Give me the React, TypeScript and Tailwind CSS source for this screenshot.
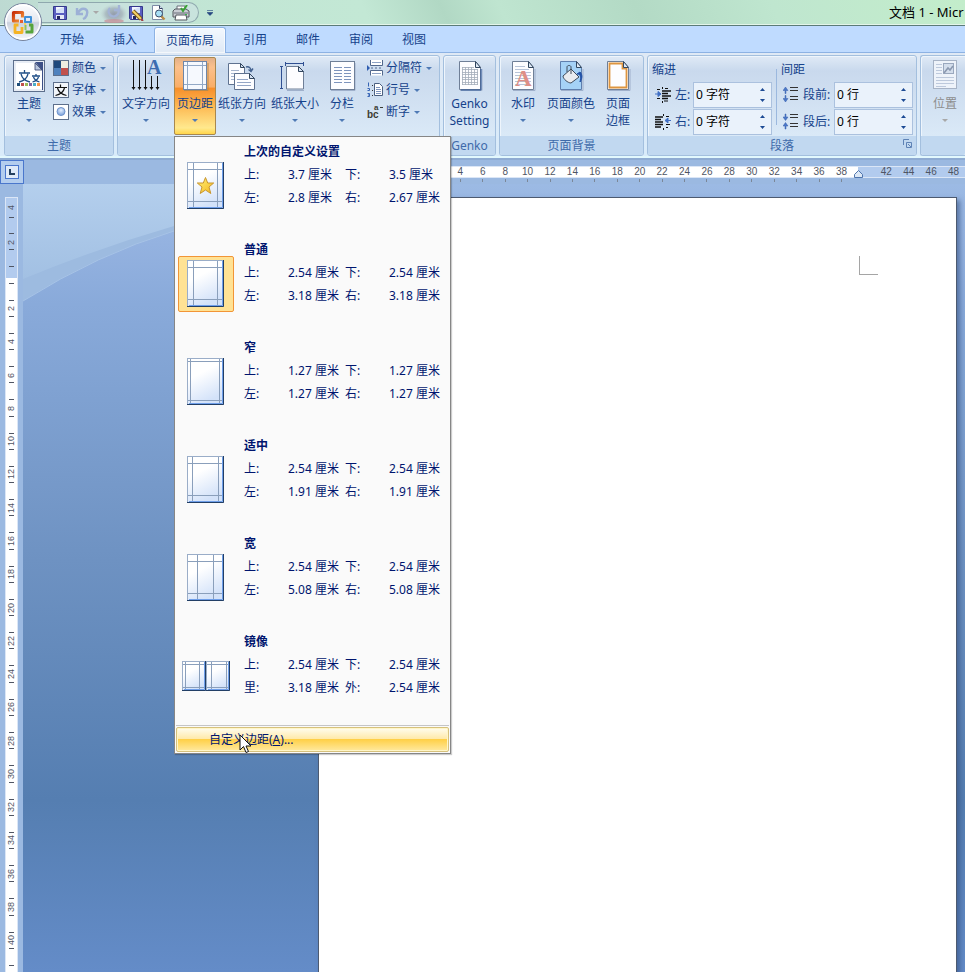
import React from "react";

type Kids = { children?: React.ReactNode };

function Caret({ muted = false }: { muted?: boolean }) {
  return (
    <svg width="6" height="3" viewBox="0 0 6 3" className="shrink-0" aria-hidden="true">
      <path d="M0 0h6L3 3z" fill={muted ? "#a8a8a8" : "#4f7ab5"} />
    </svg>
  );
}

/* ---------- quick access icons ---------- */

function SaveIcon({ pen = false }: { pen?: boolean }) {
  return (
    <svg width="16" height="16" viewBox="0 0 16 16" aria-hidden="true">
      <path d="M1.500 1.500h13v13h-12l-1-1z" fill="#5a5fc0" stroke="#35388c" />
      <rect x="4" y="2" width="8" height="6" fill="#f4f7ff" />
      <path d="M4 5l8-3v6H4z" fill="#d5e0f8" />
      <rect x="4" y="10" width="8" height="4" fill="#e5e8f5" />
      <rect x="5" y="11" width="3" height="3" fill="#23265f" />
      {pen && (
        <>
          <path d="M5 6l8 8" stroke="#7a5a1d" strokeWidth="4" />
          <path d="M5 6l8 8" stroke="#f7d469" strokeWidth="2" />
          <path d="M13 14l2 2" stroke="#a04040" strokeWidth="2" />
        </>
      )}
    </svg>
  );
}

function UndoIcon() {
  return (
    <svg width="16" height="16" viewBox="0 0 16 16" aria-hidden="true">
      <path d="M3 3v6h6M4 8c2-4 4-5 7-4 3 1 3 5 0 9l-2 1" fill="none" stroke="#9db0d6" strokeWidth="2.4" />
    </svg>
  );
}

function RedoIcon() {
  return (
    <svg width="28" height="20" viewBox="0 0 28 20" aria-hidden="true">
      <defs>
        <radialGradient id="redoGlow">
          <stop offset="0" stopColor="#939cac" />
          <stop offset="0.6" stopColor="#9aa5b0" stopOpacity="0.6" />
          <stop offset="1" stopColor="#b9c8cc" stopOpacity="0" />
        </radialGradient>
      </defs>
      <ellipse cx="14" cy="11" rx="14" ry="10" fill="url(#redoGlow)" />
      <ellipse cx="14" cy="18" rx="10" ry="2" fill="#c98f95" opacity="0.7" />
      <path d="M10 5a5 5 0 1 0 8 1M19 2v5h-5" fill="none" stroke="#a3b3d6" strokeWidth="2.4" />
    </svg>
  );
}

function PreviewIcon() {
  return (
    <svg width="16" height="16" viewBox="0 0 16 16" aria-hidden="true">
      <path d="M2.500.5h7l3 3v11h-10z" fill="#fff" stroke="#7d8ba6" />
      <path d="M9.500.5v3h3" fill="#d6e0f0" stroke="#33415f" />
      <path d="M11 11l3.500 3.500" stroke="#b98b45" strokeWidth="2.400" />
      <circle cx="9" cy="8.500" r="3.500" fill="#a9dff6" stroke="#3a4a66" />
    </svg>
  );
}

function PrintIcon() {
  return (
    <svg width="18" height="16" viewBox="0 0 18 16" aria-hidden="true">
      <path d="M5 5V1h8v4" fill="#fff" stroke="#6a6f7b" />
      <path d="M1 6l2-2h11l3 2v6H1z" fill="#c9ccd3" stroke="#54585f" />
      <path d="M2 8h14" stroke="#6a6f7b" />
      <path d="M4 10h10l1 5H3z" fill="#fff" stroke="#54585f" />
      <path d="M9 3l2 3 4-6" fill="none" stroke="#3aa335" strokeWidth="2" />
      <rect x="13" y="9" width="2" height="1" fill="#35b24a" />
    </svg>
  );
}

function OfficeLogo() {
  return (
    <svg width="40" height="40" viewBox="0 0 40 40" aria-hidden="true">
      <defs>
        <linearGradient id="orb" x1="0" y1="0" x2="0" y2="1">
          <stop offset="0" stopColor="#fdfdff" />
          <stop offset="0.48" stopColor="#e4e7ef" />
          <stop offset="0.52" stopColor="#cbd1dd" />
          <stop offset="1" stopColor="#f7f9fc" />
        </linearGradient>
        <linearGradient id="logoRed" x1="0" y1="0" x2="1" y2="1">
          <stop offset="0" stopColor="#c8300a" />
          <stop offset="1" stopColor="#f79a3b" />
        </linearGradient>
      </defs>
      <circle cx="20" cy="20" r="18.500" fill="url(#orb)" stroke="#75829c" />
      <circle cx="20" cy="20" r="17" fill="none" stroke="#fff" strokeWidth="1.500" />
      <g fill="none" strokeLinejoin="round">
        <path d="M16 19h-5.500V10.500h9v5" stroke="url(#logoRed)" strokeWidth="3.200" />
        <rect x="22" y="15" width="6" height="5" stroke="#3f8fd8" strokeWidth="2" />
        <path d="M15.500 23H12v7.500h7V25" stroke="#f5b324" strokeWidth="2.800" />
        <path d="M22.500 30h6.500v-7h-3" stroke="#57a43c" strokeWidth="3" />
        <path d="M22.500 28v-5" stroke="#8cc45c" strokeWidth="2" />
      </g>
      <rect x="17" y="18" width="3" height="3" fill="#e8602c" />
      <rect x="21" y="21" width="2" height="2" fill="#f9cf5a" />
    </svg>
  );
}

/* ---------- ribbon icons ---------- */

function Sheet({ children, fill = "#fdfdff", edge = "#6f7f97" }: Kids & { fill?: string; edge?: string }) {
  return (
    <svg width="32" height="32" viewBox="0 0 32 32" aria-hidden="true">
      <path d="M6 30.500h22V9" fill="none" stroke="#9fb0cb" />
      <path d="M5.500 1.500h16l5 6v22h-21z" fill={fill} stroke={edge} />
      {children}
      <path d="M21.500 1.500v6h5z" fill="#dfe9f5" stroke="#33475f" />
    </svg>
  );
}

function ThemeIcon() {
  return (
    <svg width="32" height="32" viewBox="0 0 32 32" aria-hidden="true">
      <rect x=".5" y=".5" width="31" height="31" fill="#e8edf5" stroke="#5d6f8c" />
      <path d="M3 3h19l7 7v19H3z" fill="#fff" />
      <path d="M22 2h8v28h-1V10z" fill="#3c4f86" />
      <path d="M22 3v7h7z" fill="#b9c6de" stroke="#33406a" strokeWidth=".8" />
      <g stroke="#1f4e86" strokeWidth="1.300" fill="none">
        <path d="M6 13h11M11.500 10v3M8 14c1 4 4 7 9 8M15 14c-1 4-4 7-9 8" />
        <path d="M19 16h8M23 14v2M20.500 17c1 3 3 4 6 5M25.500 17c-1 3-3 4-6 5" />
      </g>
      <rect x="4" y="23" width="3" height="3" fill="#1f4e79" />
      <rect x="8" y="23" width="3" height="3" fill="#c0504d" />
      <rect x="12" y="23" width="3" height="3" fill="#9bbb59" />
      <rect x="16" y="23" width="3" height="3" fill="#8064a2" />
      <rect x="20" y="23" width="3" height="3" fill="#4bacc6" />
      <rect x="24" y="23" width="3" height="3" fill="#f79646" />
    </svg>
  );
}

function ColorsIcon() {
  return (
    <svg width="16" height="16" viewBox="0 0 16 16" aria-hidden="true">
      <rect width="16" height="16" fill="#5d6f8c" />
      <rect x="1" y="1" width="7" height="7" fill="#1f497d" />
      <rect x="8" y="1" width="7" height="7" fill="#eeece1" />
      <rect x="1" y="8" width="7" height="7" fill="#4f81bd" />
      <rect x="8" y="8" width="7" height="7" fill="#c0504d" />
    </svg>
  );
}

function FontsIcon() {
  return (
    <svg width="16" height="16" viewBox="0 0 16 16" aria-hidden="true">
      <rect x=".5" y=".5" width="15" height="15" fill="#f2f5fa" stroke="#5d6f8c" />
      <path d="M2 5.500h12M7.500 2.500v3M4.500 6c1 4 4 6.500 9 7.500M11.500 6c-1 4-4 6.500-9 7.500" fill="none" stroke="#111" strokeWidth="1.200" />
    </svg>
  );
}

function EffectsIcon() {
  return (
    <svg width="16" height="16" viewBox="0 0 16 16" aria-hidden="true">
      <defs>
        <radialGradient id="bead" cx=".5" cy=".35">
          <stop offset="0" stopColor="#e4efff" />
          <stop offset="1" stopColor="#8fb0e2" />
        </radialGradient>
      </defs>
      <rect x=".5" y=".5" width="15" height="15" fill="#fff" stroke="#5d6f8c" />
      <circle cx="8" cy="7.500" r="4" fill="url(#bead)" stroke="#6f93cc" />
    </svg>
  );
}

function TextDirectionIcon() {
  return (
    <svg width="32" height="32" viewBox="0 0 32 32" aria-hidden="true">
      <path d="M3.500 0v28M9.500 0v28M15.500 0v28M21.500 16v12M27.500 16v12" stroke="#111" />
      <path d="M1.500 27h4l-2 3zM7.500 27h4l-2 3zM13.500 27h4l-2 3zM19.500 27h4l-2 3zM25.500 27h4l-2 3z" fill="#111" />
      <text x="17" y="14" fill="#3d6cb0" className="text-[20px] font-bold [font-family:'Liberation_Serif',serif]">A</text>
    </svg>
  );
}

function MarginsIcon() {
  return (
    <svg width="32" height="32" viewBox="0 0 32 32" aria-hidden="true">
      <path d="M5 30.500h24V3" fill="none" stroke="#b98a4c" />
      <rect x="4.500" y="1.500" width="23" height="28" fill="#f6f9fe" stroke="#6f86a8" />
      <path d="M8.500 2v27M23.500 2v27M5 5.500h22M5 24.500h22" stroke="#93a9c6" />
    </svg>
  );
}

function OrientationIcon() {
  return (
    <svg width="32" height="32" viewBox="0 0 32 32" aria-hidden="true">
      <path d="M2.500 3.500h12l4 4v17h-16z" fill="#fdfdff" stroke="#5f7290" />
      <path d="M14.500 3.500v4h4z" fill="#d5e1f2" stroke="#33475f" />
      <path d="M5 10.500h8M5 13.500h4M5 16.500h3M5 19.500h3" stroke="#a5b4cd" />
      <path d="M8.500 13.500h15l5 5v11h-20z" fill="#fdfdff" stroke="#5f7290" />
      <path d="M23.500 13.500v5h5z" fill="#d5e1f2" stroke="#33475f" />
      <path d="M11 19.500h11M11 22.500h14M11 25.500h14" stroke="#94a6c6" />
      <path d="M20 7c3-1 5 1 5 4M22.500 9.500l2.500 2 2-3" fill="none" stroke="#44628f" strokeWidth="1.400" />
    </svg>
  );
}

function SizeIcon() {
  return (
    <svg width="32" height="32" viewBox="0 0 32 32" aria-hidden="true">
      <path d="M6 3.500h19M6.500 2v4M24.500 2v4M2.500 6v22M1 6.500h3M1 28.500h3" stroke="#2f4f92" />
      <path d="M8 30.500h17" stroke="#9fb0cb" />
      <path d="M7.500 6.500h12l5 5v17.500h-17z" fill="#fdfdff" stroke="#6f7f97" />
      <path d="M19.500 6.500v5h5z" fill="#d5e1f2" stroke="#33475f" />
    </svg>
  );
}

function ColumnsIcon() {
  return (
    <svg width="32" height="32" viewBox="0 0 32 32" aria-hidden="true">
      <path d="M5 30.500h24V3" fill="none" stroke="#9fb0cb" />
      <rect x="4.500" y="1.500" width="24" height="28" fill="#fdfdff" stroke="#6f7f97" />
      <path d="M8 7.500h8M18 7.500h7M8 10.500h8M18 10.500h7M8 13.500h8M18 13.500h7M8 16.500h8M18 16.500h7M8 19.500h8M18 19.500h7M8 22.500h8M18 22.500h7" stroke="#7d94bd" />
    </svg>
  );
}

function BreaksIcon() {
  return (
    <svg width="16" height="16" viewBox="0 0 16 16" aria-hidden="true">
      <path d="M0 5l3 3-3 3z" fill="#2f5db0" />
      <path d="M3.500 0v5.500h12V0M3.500 15.500v-5h12v5" fill="#fff" stroke="#51678c" />
      <path d="M5 2.500h9M5 13.500h9" stroke="#8ea2c5" />
      <path d="M4 8h2M8 8h2M12 8h2" stroke="#51678c" />
    </svg>
  );
}

function LineNumbersIcon() {
  return (
    <svg width="16" height="16" viewBox="0 0 16 16" aria-hidden="true">
      <path d="M1.500.500v4M.500 6.500h2v2h-2M.500 11.500h2v3h-2M1 13h1" fill="none" stroke="#3563b4" />
      <path d="M5.500 3v1M5.500 8v1M5.500 13v1" stroke="#333" />
      <path d="M7.500 1.500h5l3 3v9h-8z" fill="#fff" stroke="#4a5f80" />
      <path d="M9 5.500h4M9 7.500h5M9 9.500h5M9 11.500h5" stroke="#7d94bd" />
    </svg>
  );
}

function HyphenIcon() {
  return (
    <svg width="16" height="16" viewBox="0 0 16 16" aria-hidden="true" fill="#3b3b33">
      <text x="0" y="14" className="text-[10px] font-bold [font-family:'Liberation_Sans',sans-serif]">bc</text>
      <text x="7" y="6" className="text-[8px] font-bold [font-family:'Liberation_Sans',sans-serif]">a</text>
      <rect x="13" y="3" width="3" height="1" />
    </svg>
  );
}

function GenkoIcon() {
  return (
    <Sheet>
      <path d="M8 7.500h12M8 9.500h16M8 12.500h16M8 14.500h16M8 17.500h16M8 19.500h16M8 22.500h16M8 24.500h16M8.500 7v18M11.500 7v18M14.500 7v18M17.500 7v18M20.500 9v16M23.500 9v16" stroke="#a3acba" strokeWidth=".8" />
      <path d="M27 9v21H7" fill="none" stroke="#2f5796" />
    </Sheet>
  );
}

function WatermarkIcon() {
  return (
    <Sheet>
      <path d="M8 6.500h10M8 9.500h14M8 12.500h16M8 15.500h16M8 18.500h16M8 21.500h16M8 24.500h16" stroke="#b8c4d8" />
      <text x="8" y="26" fill="#df8f86" className="text-[23px] font-bold [font-family:'Liberation_Serif',serif]">A</text>
    </Sheet>
  );
}

function PageColorIcon() {
  return (
    <Sheet fill="#a5d2f7" edge="#5f7fae">
      <path d="M8 16l8-7 8 8-8 6c-3 0-8-4-8-7z" fill="#e9ebef" stroke="#3f4a5a" />
      <path d="M12 12V7c0-2 4-2 4 0v7" fill="none" stroke="#3f4a5a" />
      <path d="M22 14c4 0 4 3 3 8 2-3 3-7 0-10z" fill="#2352a8" stroke="#2352a8" />
    </Sheet>
  );
}

function PageBorderIcon() {
  return (
    <Sheet>
      <path d="M7.500 3.500h13v5h4v19h-17z" fill="none" stroke="#dd9540" strokeWidth="1.800" />
    </Sheet>
  );
}

function PositionIcon() {
  return (
    <svg width="32" height="32" viewBox="0 0 32 32" aria-hidden="true">
      <rect x="4.500" y=".5" width="23" height="28" fill="#eef3fa" stroke="#a7b3c6" />
      <path d="M7 4.500h6M7 7.500h6M7 10.500h6M7 13.500h6M7 17.500h18M7 20.500h18M7 23.500h18M7 26.500h10" stroke="#bdc9dc" />
      <rect x="14.500" y="3.500" width="10" height="10" fill="#d4deec" stroke="#9aa8be" />
      <path d="M15 13l4-5 2 2 3-4" fill="none" stroke="#8b99b0" strokeWidth="1.600" />
    </svg>
  );
}

function IndentIcon({ right = false }: { right?: boolean }) {
  return (
    <svg width="16" height="16" viewBox="0 0 16 16" aria-hidden="true">
      {right ? (
        <>
          <path d="M0 3h8M0 5.500h6M0 8h8M0 10.500h8M0 13h6" stroke="#111" strokeWidth="1.500" />
          <path d="M8.500 0v2M8.500 14v2M11 2.500h3M11 10.500h4M11 13.500h2" stroke="#111" />
          <path d="M16 6.500h-4M13 4l-3 2.500L13 9z" fill="#3f6ec4" stroke="#3f6ec4" />
        </>
      ) : (
        <>
          <path d="M7 4h9M7 6.500h6M7 9h9M7 11.500h6" stroke="#111" strokeWidth="1.500" />
          <path d="M7.500 0v2M7.500 14v2M2 2.500h3M2 11.500h3M9 14h4M10 1.500h3" stroke="#111" />
          <path d="M0 7h4M3 4.500L6 7 3 9.500z" fill="#3f6ec4" stroke="#3f6ec4" />
        </>
      )}
    </svg>
  );
}

function SpacingIcon({ after = false }: { after?: boolean }) {
  return (
    <svg width="16" height="17" viewBox="0 0 16 17" aria-hidden="true">
      <path d="M7 1.500h8M7 4.500h8M7 10.500h8M7 13.500h8" stroke="#333" />
      {after ? (
        <path d="M2 1h1v3h2L2.500 7.500 0 4h2zM2 16h1v-3h2L2.500 9.500 0 13h2z" fill="#4b78c8" stroke="#3860ac" strokeWidth=".5" />
      ) : (
        <path d="M2 7.500h1v-3h2L2.500 1 0 4.500h2zM2 9.500h1v3h2L2.500 16 0 12.500h2z" fill="#4b78c8" stroke="#3860ac" strokeWidth=".5" />
      )}
    </svg>
  );
}

/* ---------- ribbon building blocks ---------- */

function Group({ label, width, launcher, children }: Kids & { label?: string; width: string; launcher?: boolean }) {
  return (
    <section
      className={`flex h-[101px] flex-col rounded-[3px] border border-[#a3bfde] bg-linear-to-b from-[#e0eaf6] from-0% via-[#c9d9ed] via-15% to-[#dae9f7] to-80% shadow-[inset_1px_1px_0_#eef5fc] ${width}`}
    >
      <div className="flex h-20 pt-px">{children}</div>
      <div className="relative flex h-[19px] items-center justify-center rounded-b-[2px] bg-[#c1d8f0] leading-4 text-[#3e6aaa]">
        {label && <h2>{label}</h2>}
        {launcher && (
          <button type="button" aria-label="段落设置" className="absolute top-[3px] right-1">
            <svg width="9" height="9" viewBox="0 0 9 9" className="block" aria-hidden="true">
              <path d="M.5 6V.5H6M3.500 3.500h5v5h-5zM5 5l3 3" fill="none" stroke="#5f83b6" />
            </svg>
          </button>
        )}
      </div>
    </section>
  );
}

function BigButton({
  icon,
  label,
  second,
  width,
  caret = true,
  active = false,
  disabled = false,
}: {
  icon: React.ReactNode;
  label: string;
  second?: string;
  width: string;
  caret?: boolean;
  active?: boolean;
  disabled?: boolean;
}) {
  const look = active
    ? "rounded-[2px] border border-[#a8884f] bg-[linear-gradient(to_bottom,#e3b088_0%,#fbc08c_12%,#f9ae68_38%,#f78f2b_40%,#fdbb55_65%,#ffe98e_92%,#ffd54a_100%)]"
    : "border border-transparent";
  return (
    <button
      type="button"
      disabled={disabled}
      className={`flex h-[78px] shrink-0 flex-col items-center pt-[2px] whitespace-nowrap ${look} ${width} ${disabled ? "text-[#8d8d8d]" : "text-[#15428b]"}`}
    >
      {icon}
      <span className="mt-[3px] leading-[18px]">{label}</span>
      {second && <span className="leading-4">{second}</span>}
      {caret && (
        <span className="mt-[6px]">
          <Caret muted={disabled} />
        </span>
      )}
    </button>
  );
}

function SmallButton({ icon, label }: { icon: React.ReactNode; label: string }) {
  return (
    <button type="button" className="flex h-[22px] items-center whitespace-nowrap text-[#15428b]">
      {icon}
      <span className="mr-1 ml-[3px] leading-4">{label}</span>
      <Caret />
    </button>
  );
}

function Spinner({ id, icon, label, value, labelWidth }: { id: string; icon: React.ReactNode; label: string; value: string; labelWidth: string }) {
  return (
    <div className="flex h-[27px] items-center">
      <label htmlFor={id} className="flex items-center gap-1 text-[#15428b]">
        {icon}
        <span className={labelWidth}>{label}</span>
      </label>
      <div className="flex h-[26px] w-[79px] items-center border border-[#abc1de] bg-[#eaf2fb] pr-[6px] pl-[2px]">
        <input id={id} defaultValue={value} className="w-0 min-w-0 flex-1 bg-transparent leading-4 text-black outline-none" />
        <div className="flex flex-col gap-2">
          <button type="button" aria-label="增加" className="block">
            <svg width="5" height="3" viewBox="0 0 5 3" className="block"><path d="M0 3h5L2.500 0z" fill="#1c4a94" /></svg>
          </button>
          <button type="button" aria-label="减少" className="block">
            <svg width="5" height="3" viewBox="0 0 5 3" className="block"><path d="M0 0h5L2.500 3z" fill="#1c4a94" /></svg>
          </button>
        </div>
      </div>
    </div>
  );
}

/* ---------- margins gallery ---------- */

type Preset = {
  name: string;
  rows: [string, string, string, string][];
  lines: [number, number, number, number];
  kind?: "star" | "selected" | "mirror";
};

const presets: Preset[] = [
  { name: "上次的自定义设置", rows: [["上:", "3.7 厘米", "下:", "3.5 厘米"], ["左:", "2.8 厘米", "右:", "2.67 厘米"]], lines: [6, 30, 7, 39], kind: "star" },
  { name: "普通", rows: [["上:", "2.54 厘米", "下:", "2.54 厘米"], ["左:", "3.18 厘米", "右:", "3.18 厘米"]], lines: [6, 30, 7, 39], kind: "selected" },
  { name: "窄", rows: [["上:", "1.27 厘米", "下:", "1.27 厘米"], ["左:", "1.27 厘米", "右:", "1.27 厘米"]], lines: [3, 32, 3, 42] },
  { name: "适中", rows: [["上:", "2.54 厘米", "下:", "2.54 厘米"], ["左:", "1.91 厘米", "右:", "1.91 厘米"]], lines: [5, 31, 7, 39] },
  { name: "宽", rows: [["上:", "2.54 厘米", "下:", "2.54 厘米"], ["左:", "5.08 厘米", "右:", "5.08 厘米"]], lines: [10, 26, 7, 39] },
  { name: "镜像", rows: [["上:", "2.54 厘米", "下:", "2.54 厘米"], ["里:", "3.18 厘米", "外:", "2.54 厘米"]], lines: [3, 17, 3, 26], kind: "mirror" },
];

function PageShape({ x = 0, w, h, lines }: { x?: number; w: number; h: number; lines: number[] }) {
  const [l, r, t, b] = lines;
  return (
    <g transform={`translate(${x} 0)`}>
      <rect x=".5" y=".5" width={w - 1} height={h - 1} fill="url(#paper)" stroke="#9aadc8" />
      <path
        d={`M${l + 0.5} 1V${h - 2}M${r + 0.5} 1V${h - 2}M1 ${t + 0.5}H${w - 2}M1 ${b + 0.5}H${w - 2}`}
        stroke="#8a9fbb"
      />
      <path d={`M${w - 1.5} 1V${h - 1.5}H2`} fill="none" stroke="#6f9fea" />
      <path d={`M${w - 0.5} 0V${h - 0.5}H0`} fill="none" stroke="#223f66" />
    </g>
  );
}

function Thumb({ preset }: { preset: Preset }) {
  const mirror = preset.kind === "mirror";
  const w = mirror ? 48 : 38;
  const h = mirror ? 30 : 48;
  return (
    <svg width={w} height={h} viewBox={`0 0 ${w} ${h}`} aria-hidden="true">
      <defs>
        <linearGradient id="paper" x1="0" y1="0" x2=".4" y2="1">
          <stop offset=".4" stopColor="#fff" />
          <stop offset="1" stopColor="#d3e2f9" />
        </linearGradient>
        <linearGradient id="gold" x1="0" y1="0" x2="1" y2="1">
          <stop offset="0" stopColor="#fff27a" />
          <stop offset="1" stopColor="#f3b51c" />
        </linearGradient>
      </defs>
      {mirror ? (
        <>
          <PageShape w={24} h={h} lines={[3, 17, 3, 26]} />
          <PageShape x={24} w={24} h={h} lines={[5, 20, 3, 26]} />
        </>
      ) : (
        <PageShape w={37} h={47} lines={preset.lines} />
      )}
      {preset.kind === "star" && (
        <path d="M18.500 15.500l2.200 5.500h6l-4.700 4 1.800 6.500-5.300-3.500-5.300 3.500 1.800-6.500-4.700-4h6z" fill="url(#gold)" stroke="#c9962f" />
      )}
    </svg>
  );
}

function MarginsMenu() {
  return (
    <div
      role="menu"
      className="absolute top-[79px] left-0 z-30 flex w-[277px] flex-col border border-[#868686] bg-[#fafafa] text-[#00156e] shadow-[1px_1px_1px_#0003]"
    >
      {presets.map((p) => (
        <button key={p.name} type="button" role="menuitem" className="flex h-[98px] items-center pl-[3px] text-left">
          <span
            className={`flex h-14 w-14 shrink-0 items-center justify-center rounded-[2px] border ${p.kind === "selected" ? "border-[#f29536] bg-[#ffe294]" : "border-transparent"}`}
          >
            <Thumb preset={p} />
          </span>
          <span className="ml-[10px] flex flex-1 flex-col self-start pt-[3px] leading-[23px] whitespace-nowrap">
            <b className="font-bold">{p.name}</b>
            {p.rows.map((r) => (
              <span key={r[0]} className="grid grid-cols-[44px_57px_44px_1fr]">
                {r.map((c, i) => (
                  <span key={i}>{c}</span>
                ))}
              </span>
            ))}
          </span>
        </button>
      ))}
      <div className="mx-px h-px bg-[#c5c5c5]" />
      <button
        type="button"
        role="menuitem"
        className="relative m-px flex h-[25px] items-center rounded-[2px] border border-[#d6c17c] bg-[linear-gradient(to_bottom,#fffdf0_0%,#ffeaab_46%,#ffd048_50%,#ffe9a0_100%)] pl-8 shadow-[inset_0_0_0_1px_#fff6c8]"
      >
        <span>
          自定义边距(<u>A</u>)...
        </span>
        <svg width="13" height="21" viewBox="0 0 13 21" className="absolute top-[6px] left-[62px]" aria-hidden="true">
          <path d="M1 1v15l3.500-3.500 2.500 6 2.500-1-2.500-5.500h5z" fill="#fff" stroke="#111" />
        </svg>
      </button>
    </div>
  );
}

/* ---------- rulers ---------- */

const acrossMarks = ["", "", "", "", "", "4", "6", "8", "10", "12", "14", "16", "18", "20", "22", "24", "26", "28", "30", "32", "34", "36", "38", "", "42", "44", "46", "48"];
const downMarks = ["2", "", "2", "4", "6", "8", "10", "12", "14", "16", "18", "20", "22", "24", "26", "28", "30", "32", "34", "36", "38", "40", ""];

function HorizontalRuler() {
  return (
    <div className="flex h-6 shrink-0 bg-[#9bb9e1]">
      <button type="button" aria-label="制表符" className="flex h-6 w-6 shrink-0 items-center justify-center border border-[#4a77cc] bg-[#b3cdee]">
        <span className="flex h-[14px] w-[14px] items-center justify-center border border-[#4a77cc] bg-[#dfeaf8]">
          <span className="h-[6px] w-[6px] border-b-2 border-l-2 border-[#24405f]" />
        </span>
      </button>
      <div className="relative ml-[313px] flex flex-1 flex-col pt-[6px]">
        <div className="flex h-3 border-y border-[#dbe6f6] bg-[linear-gradient(to_right,#fff_521px,#b2cbee_521px)] text-[10px] leading-[10px] text-[#4f5563]">
          {acrossMarks.map((m, i) => (
            <span key={i} className="flex flex-1 basis-0 justify-center [font-family:'Liberation_Sans',sans-serif]">{m}</span>
          ))}
        </div>
        <div className="flex h-[4px]">
          {acrossMarks.map((m, i) => (
            <span key={i} className="flex flex-1 basis-0 justify-center">
              {i < 23 && <span className="mt-px h-[3px] w-px bg-[#7b8798]" />}
            </span>
          ))}
        </div>
        <svg width="9" height="8" viewBox="0 0 9 8" className="absolute top-[10px] left-[517px]" aria-hidden="true">
          <path d="M.5 7.500v-3l4-4 4 4v3z" fill="#dce8f6" stroke="#4f74ac" />
        </svg>
      </div>
    </div>
  );
}

function Tick() {
  return <span className="h-px w-[5px] bg-[#4f5563]" />;
}

function DownCell({ mark }: { mark: string }) {
  return (
    <div className="flex flex-1 basis-0 flex-col items-center justify-between py-2">
      <Tick />
      <span className="flex h-3 rotate-180 items-center justify-center text-[9px] leading-[11px] text-[#4f5563] [font-family:'Liberation_Sans',sans-serif] [writing-mode:vertical-rl]">
        {mark}
      </span>
      <Tick />
    </div>
  );
}

function VerticalRuler() {
  return (
    <div className="w-[23px] shrink-0 overflow-hidden bg-[#9bb9e1] pt-[13px] pl-[5px]">
      <div className="w-[13px] border-x border-t border-[#dbe6f6] bg-[linear-gradient(to_bottom,#b2cbee_80px,#fff_80px)]">
        <div className="flex h-[27px] flex-col">
          <div className="flex h-5 items-center justify-center">
            <span className="rotate-180 text-[9px] leading-[11px] text-[#4f5563] [font-family:'Liberation_Sans',sans-serif] [writing-mode:vertical-rl]">4</span>
          </div>
          <div className="-mt-px flex justify-center">
            <Tick />
          </div>
        </div>
        <div className="flex h-[765px] flex-col">
          {downMarks.map((m, i) => (
            <DownCell key={i} mark={m} />
          ))}
        </div>
      </div>
    </div>
  );
}

/* ---------- window ---------- */

const tabs = ["开始", "插入", "页面布局", "引用", "邮件", "审阅", "视图"];

export default function App() {
  return (
    <div className="relative flex h-screen flex-col overflow-hidden bg-[#bfdbff] text-xs [font-family:'Noto_Sans','Noto_Sans_CJK_SC',sans-serif]">
      <header className="flex h-[26px] shrink-0 items-center justify-between border-b border-[#5b7b78] bg-[linear-gradient(65deg,#bdd9d2_0%,#c1e4d4_14%,#c3e8d5_38%,#b1d8c4_46%,#bfe5d0_52%,#b3dac5_66%,#bfe6cf_80%,#c3edcb_100%)] shadow-[inset_0_-1px_0_#e3f5ea]">
        <div className="flex items-center">
          <div className="ml-[38px] flex h-[21px] w-[161px] items-center rounded-r-full border border-l-0 border-[#8fa8ae] bg-[#cfe2e680] pl-[14px]">
            <button type="button" aria-label="保存"><SaveIcon /></button>
            <button type="button" aria-label="撤消" className="ml-[6px]"><UndoIcon /></button>
            <span className="ml-[3px]"><Caret muted /></span>
            <button type="button" aria-label="重复" className="ml-px"><RedoIcon /></button>
            <button type="button" aria-label="另存为"><SaveIcon pen /></button>
            <button type="button" aria-label="打印预览" className="ml-[6px]"><PreviewIcon /></button>
            <button type="button" aria-label="快速打印" className="ml-[6px]"><PrintIcon /></button>
          </div>
          <button type="button" aria-label="自定义快速访问工具栏" className="ml-2">
            <svg width="6" height="6" viewBox="0 0 6 6"><path d="M0 .5h6M0 2.500h6L3 5.500z" fill="#24457f" stroke="#24457f" strokeWidth=".6" /></svg>
          </button>
        </div>
        <h1 className="w-[76px] overflow-hidden text-[13px] whitespace-nowrap text-black">文档 1 - Micr</h1>
      </header>

      <button type="button" aria-label="Office 按钮" className="absolute top-[2px] left-[3px] z-20">
        <OfficeLogo />
      </button>

      <nav className="flex h-[27px] shrink-0 items-end gap-[5px] border-b border-[#8db2e3] bg-[#bfdbff] pl-12">
        {tabs.map((t) =>
          t === "页面布局" ? (
            <button key={t} type="button" className="-mb-px h-[26px] rounded-t-[3px] border border-b-0 border-[#8db2e3] bg-linear-to-b from-[#f3f8fe] to-[#dfe9f5] px-[11px] text-[#15428b] shadow-[inset_0_0_1px_1px_#ffffffb0]">
              {t}
            </button>
          ) : (
            <button key={t} type="button" className="h-[26px] px-3 pt-[2px] text-[#15428b]">
              {t}
            </button>
          ),
        )}
      </nav>

      <div className="relative z-10 flex h-[105px] shrink-0 gap-[3px] border-b-2 border-[#e2f8fd] bg-[#dde9f7] bg-linear-to-b from-[#dfe9f5] to-[#d9ebfa] pt-[2px] pl-1">
        <Group label="主题" width="w-[110px] shrink-0">
          <BigButton icon={<ThemeIcon />} label="主题" width="w-12" />
          <div className="flex flex-col">
            <SmallButton icon={<ColorsIcon />} label="颜色" />
            <SmallButton icon={<FontsIcon />} label="字体" />
            <SmallButton icon={<EffectsIcon />} label="效果" />
          </div>
        </Group>

        <Group width="w-[323px] shrink-0">
          <BigButton icon={<TextDirectionIcon />} label="文字方向" width="w-14" />
          <div className="relative">
            <BigButton icon={<MarginsIcon />} label="页边距" width="w-[42px]" active />
            <MarginsMenu />
          </div>
          <BigButton icon={<OrientationIcon />} label="纸张方向" width="w-[52px]" />
          <BigButton icon={<SizeIcon />} label="纸张大小" width="w-[54px]" />
          <BigButton icon={<ColumnsIcon />} label="分栏" width="w-10" />
          <div className="flex flex-col items-start pl-[5px]">
            <SmallButton icon={<BreaksIcon />} label="分隔符" />
            <SmallButton icon={<LineNumbersIcon />} label="行号" />
            <SmallButton icon={<HyphenIcon />} label="断字" />
          </div>
        </Group>

        <Group label="Genko" width="w-[53px] shrink-0">
          <BigButton icon={<GenkoIcon />} label="Genko" second="Setting" width="w-[51px]" caret={false} />
        </Group>

        <Group label="页面背景" width="w-[145px] shrink-0">
          <BigButton icon={<WatermarkIcon />} label="水印" width="w-[46px]" />
          <BigButton icon={<PageColorIcon />} label="页面颜色" width="w-[50px]" />
          <BigButton icon={<PageBorderIcon />} label="页面" second="边框" width="w-11" caret={false} />
        </Group>

        <Group label="段落" width="w-[270px] shrink-0" launcher>
          <div className="pt-[3px] pl-1 text-[#15428b]">
            <h3 className="h-5 leading-5">缩进</h3>
            <div className="pt-px pl-[3px]">
              <Spinner id="indent-left" icon={<IndentIcon />} label="左:" value="0 字符" labelWidth="w-[18px]" />
              <Spinner id="indent-right" icon={<IndentIcon right />} label="右:" value="0 字符" labelWidth="w-[18px]" />
            </div>
          </div>
          <div className="mt-3 ml-1 h-14 border-l border-[#9bb8de] shadow-[inset_1px_0_0_#fff]" />
          <div className="pt-[3px] pl-1 text-[#15428b]">
            <h3 className="h-5 leading-5">间距</h3>
            <div className="pt-px pl-[2px]">
              <Spinner id="space-before" icon={<SpacingIcon />} label="段前:" value="0 行" labelWidth="w-[31px]" />
              <Spinner id="space-after" icon={<SpacingIcon after />} label="段后:" value="0 行" labelWidth="w-[31px]" />
            </div>
          </div>
        </Group>

        <Group width="min-w-0 flex-1 overflow-hidden rounded-r-none border-r-0">
          <BigButton icon={<PositionIcon />} label="位置" width="w-12" disabled />
        </Group>
      </div>

      <div className="h-[2px] shrink-0 bg-[#8fabd2]" />
      <HorizontalRuler />

      <div className="flex min-h-0 flex-1">
        <VerticalRuler />
        <main className="relative min-w-0 flex-1 overflow-hidden bg-[linear-gradient(to_bottom,#9cbae4_0px,#94b2e0_60px,#89aada_120px,#6e92c2_376px,#557eb1_616px,#648cc8_788px)]">
          <svg width="420" height="130" viewBox="0 0 420 130" className="absolute top-0 left-0" aria-hidden="true">
            <defs>
              <linearGradient id="glow" x1="0" y1="0" x2="0" y2="1">
                <stop offset="0" stopColor="#b4cfed" />
                <stop offset="1" stopColor="#a2c0e3" />
              </linearGradient>
            </defs>
            <path d="M0 117Q75 70 151 47L300 10V0H0z" fill="#9dbbe0" />
            <path d="M0 117Q75 70 151 47" fill="none" stroke="#a7c3e6" />
            <path d="M0 95Q75 64 151 42L330 0H0z" fill="url(#glow)" />
          </svg>
          <article className="relative mt-[13px] mr-2 ml-[295px] flex h-full justify-end border border-b-0 border-[#4d5a70] bg-white shadow-[3px_3px_5px_#33507fa0]">
            <div className="mt-[58px] mr-[78px] h-[19px] w-[19px] border-b border-l border-[#a5a5a5]" />
          </article>
        </main>
      </div>
    </div>
  );
}
